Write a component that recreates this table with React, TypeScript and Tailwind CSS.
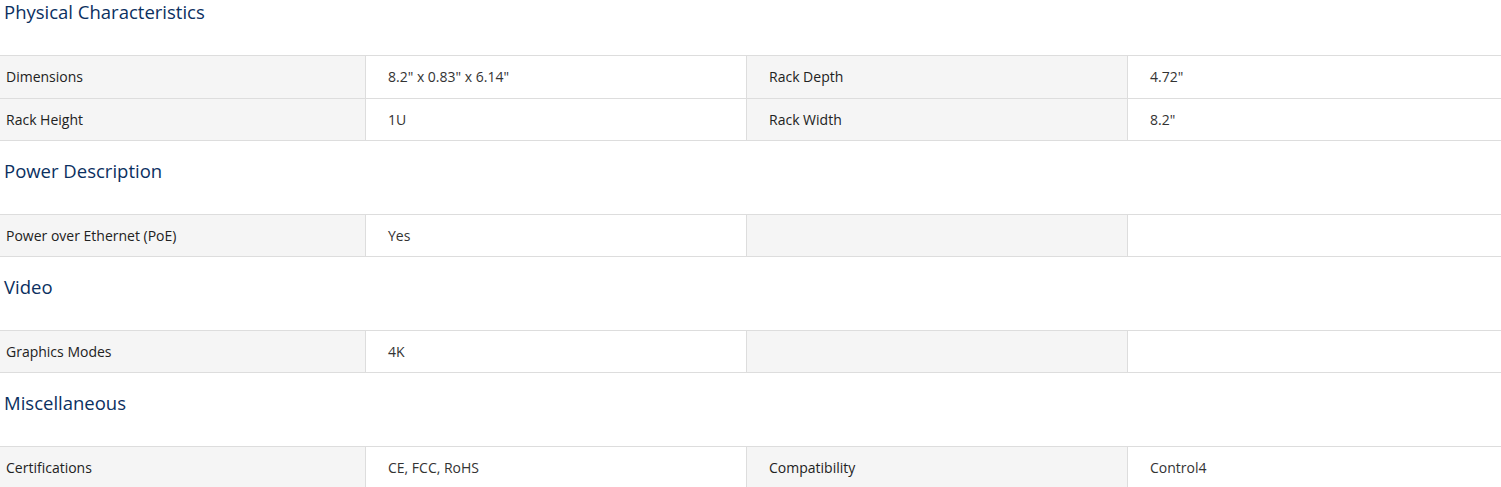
import React from 'react'

type Row = [string, string, string, string]

const sections: { title: string; rows: Row[] }[] = [
  {
    title: 'Physical Characteristics',
    rows: [
      ['Dimensions', '8.2" x 0.83" x 6.14"', 'Rack Depth', '4.72"'],
      ['Rack Height', '1U', 'Rack Width', '8.2"'],
    ],
  },
  { title: 'Power Description', rows: [['Power over Ethernet (PoE)', 'Yes', '', '']] },
  { title: 'Video', rows: [['Graphics Modes', '4K', '', '']] },
  {
    title: 'Miscellaneous',
    rows: [['Certifications', 'CE, FCC, RoHS', 'Compatibility', 'Control4']],
  },
]

function SpecTable({ rows }: { rows: Row[] }) {
  return (
    <div className="border-b border-[#dddddd]">
      {rows.map((r, i) => (
        <div
          key={i}
          className="grid grid-cols-[365px_381px_381px_1fr] h-[42.5px] border-t border-[#dddddd] text-[14px] text-[#333333]"
        >
          <div className="flex items-center pl-[6px] bg-[#f5f5f5] text-[#222222]">{r[0]}</div>
          <div className="flex items-center pl-[22px] border-l border-[#dddddd] bg-white">{r[1]}</div>
          <div className="flex items-center pl-[22px] border-l border-[#dddddd] bg-[#f5f5f5] text-[#222222]">
            {r[2]}
          </div>
          <div className="flex items-center pl-[22px] border-l border-[#dddddd] bg-white">{r[3]}</div>
        </div>
      ))}
    </div>
  )
}

export default function App() {
  return (
    <div className="w-[1501px] h-[487px] overflow-hidden bg-white font-['Open_Sans',sans-serif]">
      {sections.map((s, i) => (
        <div key={s.title}>
          <div className={i === 0 ? 'h-[55px]' : 'h-[72.5px] pt-[18px]'}>
            <h2 className="pl-[4px] text-[18.5px] leading-[23px] text-[#0b3061]">{s.title}</h2>
          </div>
          <SpecTable rows={s.rows} />
        </div>
      ))}
    </div>
  )
}
